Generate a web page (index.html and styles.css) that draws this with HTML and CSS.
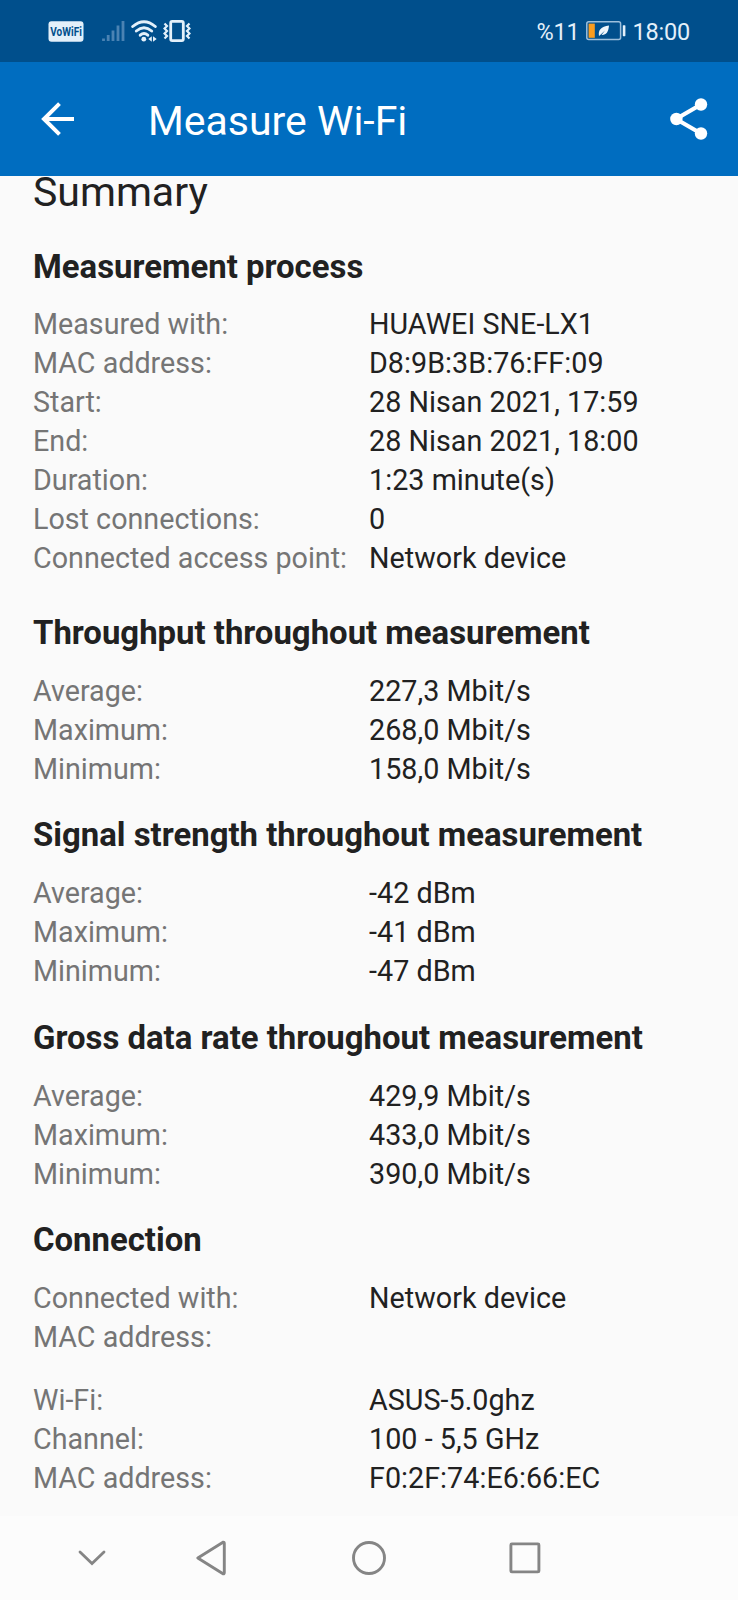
FILE: index.html
```html
<!DOCTYPE html>
<html lang="en">
<head>
    <meta charset="UTF-8">
    <meta name="viewport" content="width=device-width, initial-scale=1.0">
    <title>Measure Wi-Fi</title>
    <link rel="stylesheet" href="styles.css">
</head>
<body>
    <div class="screen">
        <div class="status-bar">
            <div class="status-left">
                <svg class="vowifi" width="36" height="21" viewBox="0 0 36 21">
                    <rect x="0.500" y="0.300" width="35" height="20.400" rx="3" fill="#e3f0fa"/>
                    <text x="2.300" y="15.300" textLength="31.500" lengthAdjust="spacingAndGlyphs">VoWiFi</text>
                </svg>
                <svg class="signal" width="24" height="22" viewBox="0 0 24 22">
                    <path d="M2.500 18.500V21M7.200 15V21M12 10.500V21M17 5.500V21M22 1V21" stroke="#4b83b3" stroke-width="2.800" fill="none"/>
                </svg>
                <svg class="wifi" width="26" height="22" viewBox="0 0 26 22">
                    <g fill="none" stroke="#e3f0fa" stroke-width="2.900" stroke-linecap="round">
                        <path d="M1.700 6.500Q13 -3 24.300 6.500"/>
                        <path d="M5.300 11Q13 4.600 20.700 11"/>
                        <path d="M9.200 15.200Q13 12 16.800 15.200"/>
                    </g>
                    <circle cx="12.800" cy="19.200" r="2.400" fill="#e3f0fa"/>
                    <path d="M20.800 16.200v5.600l-3.500-2.800zM22 16.200v5.600l3.700-2.800z" fill="#e3f0fa"/>
                </svg>
                <svg class="vibrate" width="28" height="22" viewBox="0 0 28 22">
                    <rect x="7.700" y="1.400" width="12.600" height="19.200" rx="1.500" fill="none" stroke="#e3f0fa" stroke-width="2.800"/>
                    <path d="M1.500 3.500l2.500 2.500-2.500 2.500L4 11l-2.500 2.500L4 16l-2.500 2.500M26.500 3.500L24 6l2.500 2.500L24 11l2.500 2.500L24 16l2.500 2.500" fill="none" stroke="#e3f0fa" stroke-width="2.200"/>
                </svg>
            </div>
            <div class="status-right">
                <span>%11</span>
                <svg class="battery" width="40" height="20" viewBox="0 0 40 20">
                    <rect x="0.800" y="0.800" width="33.800" height="17.800" rx="2" fill="none" stroke="#9cbfdc" stroke-width="1.500"/>
                    <rect x="2.600" y="2.600" width="6.200" height="14.200" fill="#fb9d1f"/>
                    <path d="M13 15c-1-6 2-9.500 10-10.500-.5 6-2.500 9.800-7.500 9.500l3.500-4.500-4.800 4.500z" fill="#eef6fc"/>
                    <rect x="36.800" y="4.200" width="2.600" height="11" rx="0.600" fill="#e3f0fa"/>
                </svg>
                <span>18:00</span>
            </div>
        </div>

        <header class="app-bar">
            <svg class="back" width="34" height="34" viewBox="0 0 34 34">
                <path d="M33 17H3M18.500 1.700L3 17l15.500 15.300" fill="none" stroke="#fff" stroke-width="4"/>
            </svg>
            <h1>Measure Wi-Fi</h1>
            <svg class="share" width="38" height="42" viewBox="0 0 38 42">
                <path d="M31 6.500L6 21l25 14.500" fill="none" stroke="#fff" stroke-width="4.200"/>
                <circle cx="31" cy="6.500" r="6.200" fill="#fff"/>
                <circle cx="6.400" cy="21" r="6.200" fill="#fff"/>
                <circle cx="31" cy="35.500" r="6.200" fill="#fff"/>
            </svg>
        </header>

        <main class="content">
            <h2>Summary</h2>

            <section class="process">
                <h3>Measurement process</h3>
                <dl>
                    <dt>Measured with:</dt><dd>HUAWEI SNE-LX1</dd>
                    <dt>MAC address:</dt><dd>D8:9B:3B:76:FF:09</dd>
                    <dt>Start:</dt><dd>28 Nisan 2021, 17:59</dd>
                    <dt>End:</dt><dd>28 Nisan 2021, 18:00</dd>
                    <dt>Duration:</dt><dd>1:23 minute(s)</dd>
                    <dt>Lost connections:</dt><dd>0</dd>
                    <dt>Connected access point:</dt><dd>Network device</dd>
                </dl>
            </section>

            <section>
                <h3>Throughput throughout measurement</h3>
                <dl>
                    <dt>Average:</dt><dd>227,3 Mbit/s</dd>
                    <dt>Maximum:</dt><dd>268,0 Mbit/s</dd>
                    <dt>Minimum:</dt><dd>158,0 Mbit/s</dd>
                </dl>
            </section>

            <section>
                <h3>Signal strength throughout measurement</h3>
                <dl>
                    <dt>Average:</dt><dd>-42 dBm</dd>
                    <dt>Maximum:</dt><dd>-41 dBm</dd>
                    <dt>Minimum:</dt><dd>-47 dBm</dd>
                </dl>
            </section>

            <section>
                <h3>Gross data rate throughout measurement</h3>
                <dl>
                    <dt>Average:</dt><dd>429,9 Mbit/s</dd>
                    <dt>Maximum:</dt><dd>433,0 Mbit/s</dd>
                    <dt>Minimum:</dt><dd>390,0 Mbit/s</dd>
                </dl>
            </section>

            <section>
                <h3>Connection</h3>
                <dl>
                    <dt>Connected with:</dt><dd>Network device</dd>
                    <dt>MAC address:</dt><dd></dd>
                </dl>
                <dl class="network">
                    <dt>Wi-Fi:</dt><dd>ASUS-5.0ghz</dd>
                    <dt>Channel:</dt><dd>100 - 5,5 GHz</dd>
                    <dt>MAC address:</dt><dd>F0:2F:74:E6:66:EC</dd>
                </dl>
            </section>
        </main>

        <nav class="nav-bar">
            <svg width="28" height="16" viewBox="0 0 28 16">
                <path d="M2 2l12 11.500L26 2" fill="none" stroke="#858585" stroke-width="2.800" stroke-linecap="round"/>
            </svg>
            <svg width="30" height="36" viewBox="0 0 30 36">
                <path d="M1.800 18L27 2.200Q28.300 1.800 28.300 3.500V32.500Q28.300 34.200 27 33.800z" fill="none" stroke="#858585" stroke-width="2.900" stroke-linejoin="round"/>
            </svg>
            <svg width="34" height="34" viewBox="0 0 34 34">
                <circle cx="17" cy="17" r="15.500" fill="none" stroke="#858585" stroke-width="2.900"/>
            </svg>
            <svg width="32" height="32" viewBox="0 0 32 32">
                <rect x="1.900" y="1.900" width="28" height="28" rx="1" fill="none" stroke="#858585" stroke-width="2.900"/>
            </svg>
        </nav>
    </div>
</body>
</html>
```
FILE: styles.css
```css
* {
    box-sizing: border-box;
}
body {
    margin: 0;
    font-family: Roboto, sans-serif;
    color: #212121;
    background-color: #fafafa;
}
.screen {
    display: flex;
    flex-direction: column;
    width: 738px;
    height: 1600px;
    overflow: hidden;
}
svg {
    display: block;
    flex-shrink: 0;
}

/* system status bar */
.status-bar {
    display: flex;
    justify-content: space-between;
    height: 62px;
    padding: 0 48px;
    background-color: #004f8c;
    color: #e3f0fa;
    flex-shrink: 0;
}
.status-left,
.status-right {
    display: flex;
    align-items: center;
}
.vowifi {
    overflow: visible;
}
.vowifi text {
    fill: #004f8c;
    font-size: 13.5px;
    font-weight: bold;
}
.signal {
    margin-left: 17px;
}
.wifi {
    margin-left: 6px;
}
.vibrate {
    margin-left: 6px;
}
.status-right {
    font-size: 23.5px;
    letter-spacing: -0.2px;
}
.status-right span {
    padding-top: 1px;
}
.battery {
    margin: 0 6px 0 7px;
}

/* app bar */
.app-bar {
    display: flex;
    align-items: center;
    height: 114px;
    padding: 0 30px 0 41px;
    background-color: #006dc0;
    color: white;
    flex-shrink: 0;
    z-index: 1;
}
h1 {
    flex-grow: 1;
    margin: 4px 0 0 73px;
    font-size: 41px;
    font-weight: normal;
    line-height: 48px;
}

/* scrolled result list */
.content {
    flex-grow: 1;
    min-height: 0;
    padding: 0 33px;
    overflow: hidden;
}
h2 {
    margin: -8px 0 28.5px;
    font-size: 41px;
    font-weight: normal;
    line-height: 48px;
}
section {
    margin-bottom: 24.7px;
}
.process {
    margin-bottom: 32.9px;
}
h3 {
    margin: 0 0 16.7px;
    font-size: 32.9px;
    font-weight: bold;
    line-height: 44px;
}
dl {
    display: grid;
    grid-template-columns: 336px 1fr;
    grid-auto-rows: 39px;
    margin: 0;
    font-size: 28.7px;
    line-height: 39px;
    white-space: nowrap;
}
dt {
    color: #757575;
}
dd {
    margin: 0;
    letter-spacing: 0.04px;
}
.network {
    margin-top: 24.3px;
}

/* system navigation */
.nav-bar {
    display: flex;
    align-items: center;
    height: 84px;
    padding: 0 0 0 78px;
    background-color: #fcfcfc;
    flex-shrink: 0;
}
.nav-bar svg:nth-child(2) {
    margin-left: 90px;
}
.nav-bar svg:nth-child(3) {
    margin-left: 126px;
}
.nav-bar svg:nth-child(4) {
    margin-left: 123px;
}
```
